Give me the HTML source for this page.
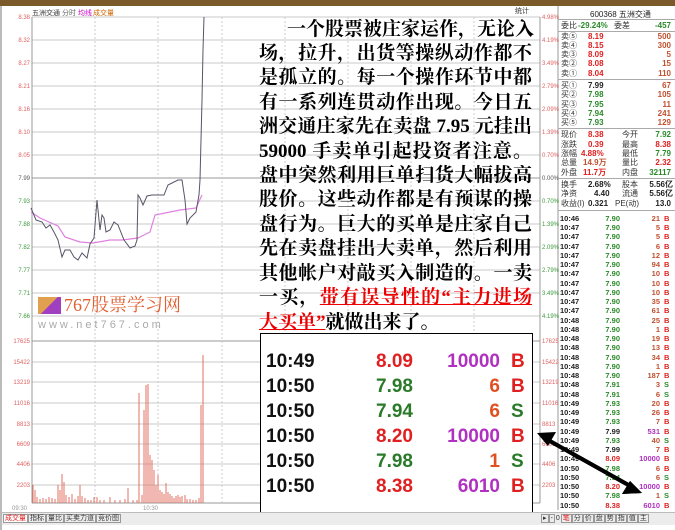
<!DOCTYPE html>
<html><head><meta charset="utf-8">
<style>
*{margin:0;padding:0;box-sizing:border-box}
body{width:675px;height:530px;background:#fff;position:relative;overflow:hidden;font-family:"Liberation Sans","Noto Sans CJK SC",sans-serif}
.a{position:absolute;white-space:nowrap}
.t{position:absolute;font-family:"Liberation Serif","Noto Serif CJK SC",serif;font-weight:bold;font-size:19px;line-height:22px;color:#000;text-align:justify;text-align-last:justify;white-space:nowrap}
.red{color:#e00;text-decoration:underline}
.rp{position:absolute;left:558px;width:117px;font-size:8px;font-weight:bold;height:9px;line-height:9px}
.rp span{position:absolute}
.bx{position:absolute;font-family:"Liberation Sans",sans-serif;font-weight:bold;font-size:19px;line-height:20px}
.r{position:absolute;left:558px;width:117px;height:9px;font-size:7.5px;line-height:9px;font-weight:bold;font-family:"Liberation Sans",sans-serif}
.r b{position:absolute}
.r b:nth-child(1){left:2px;color:#222}
.r b:nth-child(2){right:55px}
.r b:nth-child(3){right:15px}
.r b:nth-child(4){left:106px}
.g{color:#2a8a2a}.rd{color:#e02020}.o{color:#c05030}.p{color:#b030c0}.k{color:#222}
.bn{position:absolute;width:80px;text-align:right;left:420px;font-family:"Liberation Sans",sans-serif;font-weight:bold;font-size:19px;line-height:20px}
</style></head><body>
<div class="a" style="left:0;top:0;width:675px;height:6px;background:#7a5a2a"></div>
<div class="a" style="left:0;top:6px;width:675px;height:524px;background:#fff;border-left:2px solid #bbb"></div>

<svg class="a" style="left:0;top:0" width="675" height="530">
<g font-size="7" font-family="Liberation Sans,sans-serif">
<text x="32" y="15" fill="#333">五洲交通</text><text x="62" y="15" fill="#666">分时</text><text x="78" y="15" fill="#c0c">均线</text><text x="93" y="15" fill="#c60">成交量</text>
<text x="515" y="13" fill="#333">统计</text>
</g>
<g stroke="#c8c8c8" stroke-width="1">
<line x1="32" y1="17" x2="540" y2="17"/><line x1="32" y1="40" x2="540" y2="40"/><line x1="32" y1="63" x2="540" y2="63"/><line x1="32" y1="86" x2="540" y2="86"/><line x1="32" y1="109" x2="540" y2="109"/><line x1="32" y1="132" x2="540" y2="132"/><line x1="32" y1="155" x2="540" y2="155"/>
<line x1="32" y1="178" x2="540" y2="178" stroke="#999"/>
<line x1="32" y1="201" x2="540" y2="201"/><line x1="32" y1="224" x2="540" y2="224"/><line x1="32" y1="247" x2="540" y2="247"/><line x1="32" y1="270" x2="540" y2="270"/><line x1="32" y1="293" x2="540" y2="293"/><line x1="32" y1="316" x2="540" y2="316"/>
<line x1="32" y1="341" x2="540" y2="341" stroke="#999"/><line x1="32" y1="362" x2="540" y2="362"/><line x1="32" y1="382" x2="540" y2="382"/><line x1="32" y1="403" x2="540" y2="403"/><line x1="32" y1="424" x2="540" y2="424"/><line x1="32" y1="444" x2="540" y2="444"/><line x1="32" y1="464" x2="540" y2="464"/><line x1="32" y1="485" x2="540" y2="485"/>
<line x1="32" y1="503" x2="540" y2="503" stroke="#999"/>
</g>
<g stroke="#ccc" stroke-dasharray="2,2">
<line x1="95" y1="17" x2="95" y2="503"/><line x1="158" y1="17" x2="158" y2="503"/><line x1="222" y1="17" x2="222" y2="503"/><line x1="285" y1="17" x2="285" y2="503"/><line x1="348" y1="17" x2="348" y2="503"/><line x1="411" y1="17" x2="411" y2="503"/><line x1="474" y1="17" x2="474" y2="503"/>
</g>
<line x1="32" y1="17" x2="32" y2="503" stroke="#999"/><line x1="540" y1="17" x2="540" y2="503" stroke="#999"/>
<line x1="558" y1="6" x2="558" y2="510" stroke="#999"/>
<g font-size="6" font-family="Liberation Sans,sans-serif" text-anchor="end">
<g fill="#e06060"><text x="30" y="19">8.38</text><text x="30" y="42">8.32</text><text x="30" y="65">8.27</text><text x="30" y="88">8.21</text><text x="30" y="111">8.16</text><text x="30" y="134">8.10</text><text x="30" y="157">8.05</text></g>
<text x="30" y="180" fill="#555">7.99</text>
<g fill="#3a9a3a"><text x="30" y="203">7.93</text><text x="30" y="226">7.88</text><text x="30" y="249">7.82</text><text x="30" y="272">7.77</text><text x="30" y="295">7.71</text><text x="30" y="318">7.66</text></g>
<g fill="#e06060"><text x="30" y="343">17625</text><text x="30" y="364">15422</text><text x="30" y="384">13219</text><text x="30" y="405">11016</text><text x="30" y="426">8813</text><text x="30" y="446">6609</text><text x="30" y="466">4406</text><text x="30" y="487">2203</text></g>
</g>
<g font-size="6" font-family="Liberation Sans,sans-serif">
<g fill="#e06060"><text x="542" y="19">4.98%</text><text x="542" y="42">4.19%</text><text x="542" y="65">3.49%</text><text x="542" y="88">2.79%</text><text x="542" y="111">2.09%</text><text x="542" y="134">1.39%</text><text x="542" y="157">0.70%</text></g>
<text x="542" y="180" fill="#555">0.00%</text>
<g fill="#3a9a3a"><text x="542" y="203">0.70%</text><text x="542" y="226">1.39%</text><text x="542" y="249">2.09%</text><text x="542" y="272">2.79%</text><text x="542" y="295">3.49%</text><text x="542" y="318">4.19%</text></g>
<g fill="#e06060"><text x="542" y="343">17625</text><text x="542" y="364">15422</text><text x="542" y="384">13219</text><text x="542" y="405">11016</text><text x="542" y="426">8813</text><text x="542" y="446">6609</text><text x="542" y="466">4406</text><text x="542" y="487">2203</text></g>
<text x="12" y="510" fill="#999">09:30</text><text x="143" y="510" fill="#999">10:30</text>
</g>
<polyline fill="none" stroke="#e080e0" stroke-width="1.2" points="31,212 40,218 58,226 65,237 80,242 93,243 110,240 122,240 138,238 150,232 155,215 180,210 196,208 202,195"/>
<polyline fill="none" stroke="#556" stroke-width="1" points="31,208 36,220 42,222 46,228 50,225 54,232 58,240 62,257 65,250 70,250 74,257 78,260 82,253 87,258 90,244 94,238 97,200 98,210 100,230 102,215 104,218 106,232 110,230 114,222 118,225 124,240 130,248 135,246 137,240 138,195 140,198 143,205 147,196 152,195 164,195 168,185 172,183 178,180 182,180 185,200 187,224 190,218 196,212 199,195 200,180 202,100 203,50 204,17"/>
<g stroke="#e07060" stroke-width="1">
<path d="M33 503V485M35 503V490M37 503V497M40 503V499M43 503V498M46 503V499M49 503V497M52 503V498M55 503V499M58 503V485M60 503V490M62 503V474M64 503V482M66 503V495M69 503V497M72 503V494M75 503V499M78 503V496M80 503V485M82 503V496M85 503V498M88 503V500M91 503V500M94 503V497M97 503V497M100 503V500M104 503V500M110 503V497M115 503V500M120 503V500M125 503V499M128 503V488M133 503V500M137 503V500M139 503V393M142 503V495M144 503V410M146 503V385M148 503V384M150 503V455M152 503V460M154 503V470M156 503V485M158 503V475M160 503V490M162 503V492M164 503V494M166 503V483M168 503V492M170 503V494M172 503V496M174 503V498M176 503V496M178 503V495M180 503V497M182 503V496M185 503V495M187 503V499M190 503V499M193 503V500M196 503V500M199 503V498M201 503V405M203 503V355"/>
</g>
<line x1="548" y1="440" x2="632" y2="487" stroke="#000" stroke-width="4"/>
<polygon points="537,433 556,432 548,446" fill="#000"/>
<polygon points="642,493 622,494 630,481" fill="#000"/>
</svg>

<div class="a" style="left:38px;top:297px;width:23px;height:17px;background:linear-gradient(135deg,#e0a050 50%,#a040c0 50%)"></div>
<div class="a" style="left:64px;top:294px;font-size:18px;color:#e06030;font-family:'Liberation Serif','Noto Serif CJK SC',serif;line-height:22px">767股票学习网</div>
<div class="a" style="left:38px;top:319px;font-size:11px;color:#aaa;letter-spacing:3px">www.net767.com</div>

<div class="t" style="left:287px;top:19px;width:245px">一个股票被庄家运作，无论入</div>
<div class="t" style="left:259px;top:43px;width:273px">场，拉升，出货等操纵动作都不</div>
<div class="t" style="left:259px;top:67px;width:273px">是孤立的。每一个操作环节中都</div>
<div class="t" style="left:259px;top:92px;width:273px">有一系列连贯动作出现。今日五</div>
<div class="t" style="left:259px;top:116px;width:273px">洲交通庄家先在卖盘 7.95 元挂出</div>
<div class="t" style="left:259px;top:141px;width:273px">59000 手卖单引起投资者注意。</div>
<div class="t" style="left:259px;top:165px;width:273px">盘中突然利用巨单扫货大幅拔高</div>
<div class="t" style="left:259px;top:189px;width:273px">股价。这些动作都是有预谋的操</div>
<div class="t" style="left:259px;top:214px;width:273px">盘行为。巨大的买单是庄家自己</div>
<div class="t" style="left:259px;top:238px;width:273px">先在卖盘挂出大卖单，然后利用</div>
<div class="t" style="left:259px;top:263px;width:273px">其他帐户对敲买入制造的。一卖</div>
<div class="t" style="left:259px;top:287px;width:273px">一买，<span class="red">带有误导性的“主力进场</span></div>
<div class="t" style="left:259px;top:312px;text-align:left;text-align-last:left"><span class="red">大买单”</span>就做出来了。</div>

<div class="a" style="left:260px;top:333px;width:273px;height:180px;border:1.5px solid #000;background:#fff"></div>
<div class="bx a" style="left:266px;top:352px;color:#111">10:49</div><div class="bx a" style="left:376px;top:352px;color:#e02020">8.09</div><div class="bn p" style="top:352px">10000</div><div class="bx a" style="left:511px;top:352px;color:#e02020">B</div>
<div class="bx a" style="left:266px;top:377px;color:#111">10:50</div><div class="bx a" style="left:376px;top:377px;color:#2a7a2a">7.98</div><div class="bn" style="top:377px;color:#e05020">6</div><div class="bx a" style="left:511px;top:377px;color:#e02020">B</div>
<div class="bx a" style="left:266px;top:402px;color:#111">10:50</div><div class="bx a" style="left:376px;top:402px;color:#2a7a2a">7.94</div><div class="bn" style="top:402px;color:#e05020">6</div><div class="bx a" style="left:511px;top:402px;color:#2a7a2a">S</div>
<div class="bx a" style="left:266px;top:427px;color:#111">10:50</div><div class="bx a" style="left:376px;top:427px;color:#e02020">8.20</div><div class="bn p" style="top:427px">10000</div><div class="bx a" style="left:511px;top:427px;color:#e02020">B</div>
<div class="bx a" style="left:266px;top:452px;color:#111">10:50</div><div class="bx a" style="left:376px;top:452px;color:#2a7a2a">7.98</div><div class="bn" style="top:452px;color:#e05020">1</div><div class="bx a" style="left:511px;top:452px;color:#2a7a2a">S</div>
<div class="bx a" style="left:266px;top:477px;color:#111">10:50</div><div class="bx a" style="left:376px;top:477px;color:#e02020">8.38</div><div class="bn p" style="top:477px">6010</div><div class="bx a" style="left:511px;top:477px;color:#e02020">B</div>

<div class="a" style="left:590px;top:9px;font-size:8px;color:#222">600368 五洲交通</div>
<div class="a" style="left:558px;top:19px;width:117px;border-top:1px solid #aaa"></div>
<div class="rp" style="top:21px"><span style="left:3px;color:#333;font-weight:normal">委比</span><span style="left:20px;color:#2a8a2a">-29.24%</span><span style="left:56px;color:#333;font-weight:normal">委差</span><span style="right:4px;color:#2a8a2a">-457</span></div>
<div class="a" style="left:558px;top:31px;width:117px;border-top:1px solid #aaa"></div>
<div class="rp" style="top:32px"><span style="left:3px;color:#333;font-weight:normal">卖⑤</span><span style="left:30px;color:#e02020">8.19</span><span style="right:4px;color:#c05030">500</span></div>
<div class="rp" style="top:41px"><span style="left:3px;color:#333;font-weight:normal">卖④</span><span style="left:30px;color:#e02020">8.15</span><span style="right:4px;color:#c05030">300</span></div>
<div class="rp" style="top:50px"><span style="left:3px;color:#333;font-weight:normal">卖③</span><span style="left:30px;color:#e02020">8.09</span><span style="right:4px;color:#c05030">5</span></div>
<div class="rp" style="top:59px"><span style="left:3px;color:#333;font-weight:normal">卖②</span><span style="left:30px;color:#e02020">8.08</span><span style="right:4px;color:#c05030">15</span></div>
<div class="rp" style="top:69px"><span style="left:3px;color:#333;font-weight:normal">卖①</span><span style="left:30px;color:#e02020">8.04</span><span style="right:4px;color:#c05030">110</span></div>
<div class="a" style="left:558px;top:79px;width:117px;border-top:1px solid #aaa"></div>
<div class="rp" style="top:81px"><span style="left:3px;color:#333;font-weight:normal">买①</span><span style="left:30px;color:#222">7.99</span><span style="right:4px;color:#c05030">67</span></div>
<div class="rp" style="top:90px"><span style="left:3px;color:#333;font-weight:normal">买②</span><span style="left:30px;color:#2a8a2a">7.98</span><span style="right:4px;color:#c05030">105</span></div>
<div class="rp" style="top:100px"><span style="left:3px;color:#333;font-weight:normal">买③</span><span style="left:30px;color:#2a8a2a">7.95</span><span style="right:4px;color:#c05030">11</span></div>
<div class="rp" style="top:109px"><span style="left:3px;color:#333;font-weight:normal">买④</span><span style="left:30px;color:#2a8a2a">7.94</span><span style="right:4px;color:#c05030">241</span></div>
<div class="rp" style="top:118px"><span style="left:3px;color:#333;font-weight:normal">买⑤</span><span style="left:30px;color:#2a8a2a">7.93</span><span style="right:4px;color:#c05030">129</span></div>
<div class="a" style="left:558px;top:128px;width:117px;border-top:1px solid #aaa"></div>
<div class="rp" style="top:130px"><span style="left:3px;color:#333;font-weight:normal">现价</span><span style="left:30px;color:#e02020">8.38</span><span style="left:64px;color:#333;font-weight:normal">今开</span><span style="right:4px;color:#2a8a2a">7.92</span></div>
<div class="rp" style="top:140px"><span style="left:3px;color:#333;font-weight:normal">涨跌</span><span style="left:30px;color:#e02020">0.39</span><span style="left:64px;color:#333;font-weight:normal">最高</span><span style="right:4px;color:#e02020">8.38</span></div>
<div class="rp" style="top:149px"><span style="left:3px;color:#333;font-weight:normal">涨幅</span><span style="left:23px;color:#e02020">4.88%</span><span style="left:64px;color:#333;font-weight:normal">最低</span><span style="right:4px;color:#2a8a2a">7.79</span></div>
<div class="rp" style="top:158px"><span style="left:3px;color:#333;font-weight:normal">总量</span><span style="left:25px;color:#c05030">14.9万</span><span style="left:64px;color:#333;font-weight:normal">量比</span><span style="right:4px;color:#e02020">2.32</span></div>
<div class="rp" style="top:168px"><span style="left:3px;color:#333;font-weight:normal">外盘</span><span style="left:25px;color:#e02020">11.7万</span><span style="left:64px;color:#333;font-weight:normal">内盘</span><span style="right:4px;color:#2a8a2a">32117</span></div>
<div class="a" style="left:558px;top:178px;width:117px;border-top:1px solid #aaa"></div>
<div class="rp" style="top:180px"><span style="left:3px;color:#333;font-weight:normal">换手</span><span style="left:30px;color:#222">2.68%</span><span style="left:64px;color:#333;font-weight:normal">股本</span><span style="right:2px;color:#222">5.56亿</span></div>
<div class="rp" style="top:189px"><span style="left:3px;color:#333;font-weight:normal">净资</span><span style="left:36px;color:#222">4.40</span><span style="left:64px;color:#333;font-weight:normal">流通</span><span style="right:2px;color:#222">5.56亿</span></div>
<div class="rp" style="top:199px"><span style="left:3px;color:#333;font-weight:normal">收益(I)</span><span style="left:30px;color:#222">0.321</span><span style="left:57px;color:#333;font-weight:normal">PE(动)</span><span style="right:4px;color:#222">13.0</span></div>
<div class="a" style="left:558px;top:210px;width:117px;border-top:1px solid #aaa"></div>

<div class="r" style="top:214px"><b>10:46</b><b class="g">7.90</b><b class="o">21</b><b class="rd">B</b></div>
<div class="r" style="top:223px"><b>10:47</b><b class="g">7.90</b><b class="o">5</b><b class="rd">B</b></div>
<div class="r" style="top:232px"><b>10:47</b><b class="g">7.90</b><b class="o">5</b><b class="rd">B</b></div>
<div class="r" style="top:242px"><b>10:47</b><b class="g">7.90</b><b class="o">6</b><b class="rd">B</b></div>
<div class="r" style="top:251px"><b>10:47</b><b class="g">7.90</b><b class="o">12</b><b class="rd">B</b></div>
<div class="r" style="top:260px"><b>10:47</b><b class="g">7.90</b><b class="o">94</b><b class="rd">B</b></div>
<div class="r" style="top:269px"><b>10:47</b><b class="g">7.90</b><b class="o">10</b><b class="rd">B</b></div>
<div class="r" style="top:279px"><b>10:47</b><b class="g">7.90</b><b class="o">10</b><b class="rd">B</b></div>
<div class="r" style="top:288px"><b>10:47</b><b class="g">7.90</b><b class="o">10</b><b class="rd">B</b></div>
<div class="r" style="top:297px"><b>10:47</b><b class="g">7.90</b><b class="o">35</b><b class="rd">B</b></div>
<div class="r" style="top:306px"><b>10:47</b><b class="g">7.90</b><b class="o">61</b><b class="rd">B</b></div>
<div class="r" style="top:316px"><b>10:48</b><b class="g">7.90</b><b class="o">25</b><b class="rd">B</b></div>
<div class="r" style="top:325px"><b>10:48</b><b class="g">7.90</b><b class="o">1</b><b class="rd">B</b></div>
<div class="r" style="top:334px"><b>10:48</b><b class="g">7.90</b><b class="o">19</b><b class="rd">B</b></div>
<div class="r" style="top:343px"><b>10:48</b><b class="g">7.90</b><b class="o">13</b><b class="rd">B</b></div>
<div class="r" style="top:353px"><b>10:48</b><b class="g">7.90</b><b class="o">34</b><b class="rd">B</b></div>
<div class="r" style="top:362px"><b>10:48</b><b class="g">7.90</b><b class="o">1</b><b class="rd">B</b></div>
<div class="r" style="top:371px"><b>10:48</b><b class="g">7.90</b><b class="o">187</b><b class="rd">B</b></div>
<div class="r" style="top:380px"><b>10:48</b><b class="g">7.91</b><b class="o">3</b><b class="g">S</b></div>
<div class="r" style="top:390px"><b>10:48</b><b class="g">7.91</b><b class="o">6</b><b class="g">S</b></div>
<div class="r" style="top:399px"><b>10:49</b><b class="g">7.93</b><b class="o">20</b><b class="rd">B</b></div>
<div class="r" style="top:408px"><b>10:49</b><b class="g">7.93</b><b class="o">26</b><b class="rd">B</b></div>
<div class="r" style="top:417px"><b>10:49</b><b class="g">7.93</b><b class="o">7</b><b class="rd">B</b></div>
<div class="r" style="top:427px"><b>10:49</b><b class="k">7.99</b><b class="p">531</b><b class="rd">B</b></div>
<div class="r" style="top:436px"><b>10:49</b><b class="g">7.93</b><b class="o">40</b><b class="g">S</b></div>
<div class="r" style="top:445px"><b>10:49</b><b class="k">7.99</b><b class="o">7</b><b class="rd">B</b></div>
<div class="r" style="top:454px"><b>10:49</b><b class="rd">8.09</b><b class="p">10000</b><b class="rd">B</b></div>
<div class="r" style="top:464px"><b>10:50</b><b class="g">7.98</b><b class="o">6</b><b class="rd">B</b></div>
<div class="r" style="top:473px"><b>10:50</b><b class="g">7.94</b><b class="o">6</b><b class="g">S</b></div>
<div class="r" style="top:482px"><b>10:50</b><b class="rd">8.20</b><b class="p">10000</b><b class="rd">B</b></div>
<div class="r" style="top:491px"><b>10:50</b><b class="g">7.98</b><b class="o">1</b><b class="g">S</b></div>
<div class="r" style="top:501px"><b>10:50</b><b class="rd">8.38</b><b class="p">6010</b><b class="rd">B</b></div>

<svg class="a" style="left:0;top:0" width="675" height="530"><line x1="548" y1="440" x2="632" y2="487" stroke="#000" stroke-width="4"/><polygon points="642,493 622,494 630,481" fill="#000"/></svg>

<div class="a" style="left:2px;top:512px;width:673px;height:13px;background:#ececec;border-top:1px solid #bbb"></div>
<div class="a" style="left:3px;top:513px;font-size:7px;line-height:11px;color:#333">
<span style="border:1px solid #999;padding:0 1px;color:#e02020;background:#fff">成交量</span><span style="border:1px solid #999;padding:0 1px">指标</span><span style="border:1px solid #999;padding:0 1px">量比</span><span style="border:1px solid #999;padding:0 1px">买卖力道</span><span style="border:1px solid #999;padding:0 1px">竞价图</span></div>
<div class="a" style="left:541px;top:513px;font-size:7px;line-height:11px;color:#333">
<span style="border:1px solid #999;padding:0 1px">▸</span><span style="border:1px solid #999;padding:0 1px">-</span><span style="padding:0 1px">0</span><span style="border:1px solid #999;padding:0 1px;color:#e02020">笔</span><span style="border:1px solid #999;padding:0 1px">分</span><span style="border:1px solid #999;padding:0 1px">价</span><span style="border:1px solid #999;padding:0 1px">盘</span><span style="border:1px solid #999;padding:0 1px">势</span><span style="border:1px solid #999;padding:0 1px">指</span><span style="border:1px solid #999;padding:0 1px">值</span><span style="border:1px solid #999;padding:0 1px">主</span></div>
</body></html>
